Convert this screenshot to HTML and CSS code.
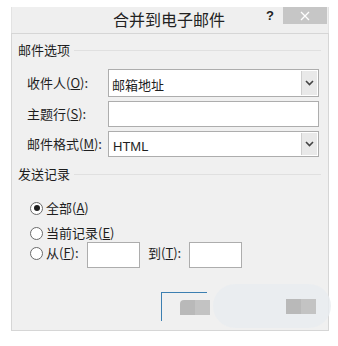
FILE: index.html
```html
<!DOCTYPE html>
<html lang="zh-CN">
<head>
<meta charset="utf-8">
<title>合并到电子邮件</title>
<link rel="stylesheet" href="styles.css">
</head>
<body>
<div class="window">
  <div class="titlebar">
    <div class="title">合并到电子邮件</div>
    <div class="help">?</div>
    <div class="close">
      <svg width="10" height="10" viewBox="0 0 10 10"><path d="M1 1L9 9M9 1L1 9" stroke="#fff" stroke-width="1.3"/></svg>
    </div>
  </div>
  <div class="client">
    <div class="group-head g1"><span>邮件选项</span><i class="rule"></i></div>
    <div class="form">
      <label class="lbl">收件人(<u>O</u>):</label>
      <div class="select"><span class="val">邮箱地址</span><span class="arrow"><svg width="9" height="6" viewBox="0 0 9 6"><path d="M1 1L4.5 4.5L8 1" fill="none" stroke="#444" stroke-width="1.6"/></svg></span></div>
      <label class="lbl">主题行(<u>S</u>):</label>
      <div class="input"></div>
      <label class="lbl">邮件格式(<u>M</u>):</label>
      <div class="select"><span class="val latin">HTML</span><span class="arrow"><svg width="9" height="6" viewBox="0 0 9 6"><path d="M1 1L4.5 4.5L8 1" fill="none" stroke="#444" stroke-width="1.6"/></svg></span></div>
    </div>
    <div class="group-head g2"><span>发送记录</span><i class="rule"></i></div>
    <div class="radios">
      <div class="radio r1"><span class="dot on"></span><span>全部(<u>A</u>)</span></div>
      <div class="radio r2"><span class="dot"></span><span>当前记录(<u>E</u>)</span></div>
      <div class="radio r3"><span class="dot"></span><span class="from">从(<u>F</u>):</span><span class="box"></span><span class="to">到(<u>T</u>):</span><span class="box"></span></div>
    </div>
    <div class="buttons">
      <div class="btn ok"><span class="blob a"></span></div>
      <div class="btn cancel"><span class="blob b"></span></div>
      <div class="wm"></div>
    </div>
  </div>
</div>
</body>
</html>
```
FILE: styles.css
```css
* { box-sizing: border-box; }
body {
  margin: 0;
  background: #ffffff;
  font-family: "Noto Sans CJK SC", "Noto Sans", sans-serif;
  color: #1e1e1e;
  width: 338px;
  height: 346px;
  overflow: hidden;
}
u { text-decoration: underline; text-underline-offset: 1px; }
.window {
  margin: 7px 0 0 11px;
  width: 318px;
}
.titlebar {
  position: relative;
  height: 26px;
  background: #efefef;
  border-left: 1px solid #e3e3e3;
  border-right: 1px solid #e3e3e3;
}
.title {
  text-align: center;
  font-size: 16px;
  line-height: 22px;
  padding-top: 1px;
  padding-right: 2px;
  color: #222;
}
.help {
  position: absolute;
  left: 254px;
  top: 0;
  font-family: "Liberation Sans", sans-serif;
  font-weight: bold;
  font-size: 13px;
  line-height: 17px;
  color: #222;
}
.close {
  position: absolute;
  left: 271px;
  top: 0;
  width: 44px;
  height: 17px;
  background: #c6c6c6;
  display: flex;
  align-items: center;
  justify-content: center;
}
.client {
  position: relative;
  height: 298px;
  background: #f0f0f0;
  border: 1px solid #d6d6d6;
  padding: 8px 0 0 6px;
}
.group-head {
  display: flex;
  align-items: center;
  font-size: 13px;
  line-height: 16px;
  height: 16px;
  width: 303px;
}
.group-head .rule {
  flex: 1;
  height: 1px;
  background: #e0e0e0;
  margin-left: 4px;
  margin-top: 1px;
}
.form {
  display: grid;
  grid-template-columns: 81px 211px;
  row-gap: 4px;
  margin: 11px 0 0 9px;
  align-items: center;
}
.lbl {
  font-size: 13px;
  line-height: 16px;
  color: #1e1e1e;
}
.select {
  height: 28px;
  border: 1px solid #adadad;
  background: #fff;
  display: flex;
  align-items: stretch;
}
.select .val {
  flex: 1;
  font-size: 13px;
  line-height: 26px;
  padding: 2px 0 0 3px;
}
.select .val.latin {
  font-family: "Liberation Sans", sans-serif;
  font-size: 13px;
  padding-left: 4px;
}
.select .arrow {
  width: 16px;
  margin: 1px 1px 1px 0;
  background: #e9e9e9;
  border-left: 1px solid #cfcfcf;
  display: flex;
  align-items: center;
  justify-content: center;
}
.form .select:last-child { height: 26px; }
.input {
  height: 26px;
  border: 1px solid #adadad;
  background: #fff;
}
.g2 { margin-top: 9px; }
.radios {
  margin: 0 0 0 12px;
}
.radio {
  display: flex;
  align-items: center;
  font-size: 13px;
  line-height: 16px;
  height: 16px;
}
.r1 { margin-top: 18px; }
.r2 { margin-top: 9px; }
.r3 { margin-top: 4px; height: 26px; align-items: flex-start; }
.r3 .dot { margin-top: 2px; }
.dot {
  width: 13px;
  height: 13px;
  border: 1px solid #6a6a6a;
  border-radius: 50%;
  background: #fff;
  margin-right: 3px;
  position: relative;
  flex: none;
}
.dot.on::after {
  content: "";
  position: absolute;
  left: 2.5px;
  top: 2.5px;
  width: 6px;
  height: 6px;
  border-radius: 50%;
  background: #1e1e1e;
}
.box {
  width: 53px;
  height: 26px;
  border: 1px solid #adadad;
  background: #fff;
  margin-top: -3px;
}
.from { width: 41px; }
.to { margin-left: 8px; width: 41px; }
.buttons {
  position: relative;
  display: flex;
  margin: 21px 0 0 143px;
  height: 29px;
}
.btn {
  width: 46px;
  height: 29px;
  position: relative;
  z-index: 1;
}
.btn.ok {
  border-top: 1px solid #3c7fb1;
  border-left: 1px solid #3c7fb1;
}
.btn.cancel { margin-left: 63px; }
.blob {
  position: absolute;
  top: 7px;
  height: 15px;
  width: 30px;
  background: linear-gradient(90deg, #b9b9b9 0 50%, #c3c3c3 50% 100%);
}
.blob.a { left: 18px; border-radius: 4px 0 0 0; }
.blob.b { left: 16px; }
.wm {
  position: absolute;
  left: 52px;
  top: -8px;
  width: 118px;
  height: 44px;
  border-radius: 22px;
  background: #e8ecf0;
  opacity: 0.8;
}
```
